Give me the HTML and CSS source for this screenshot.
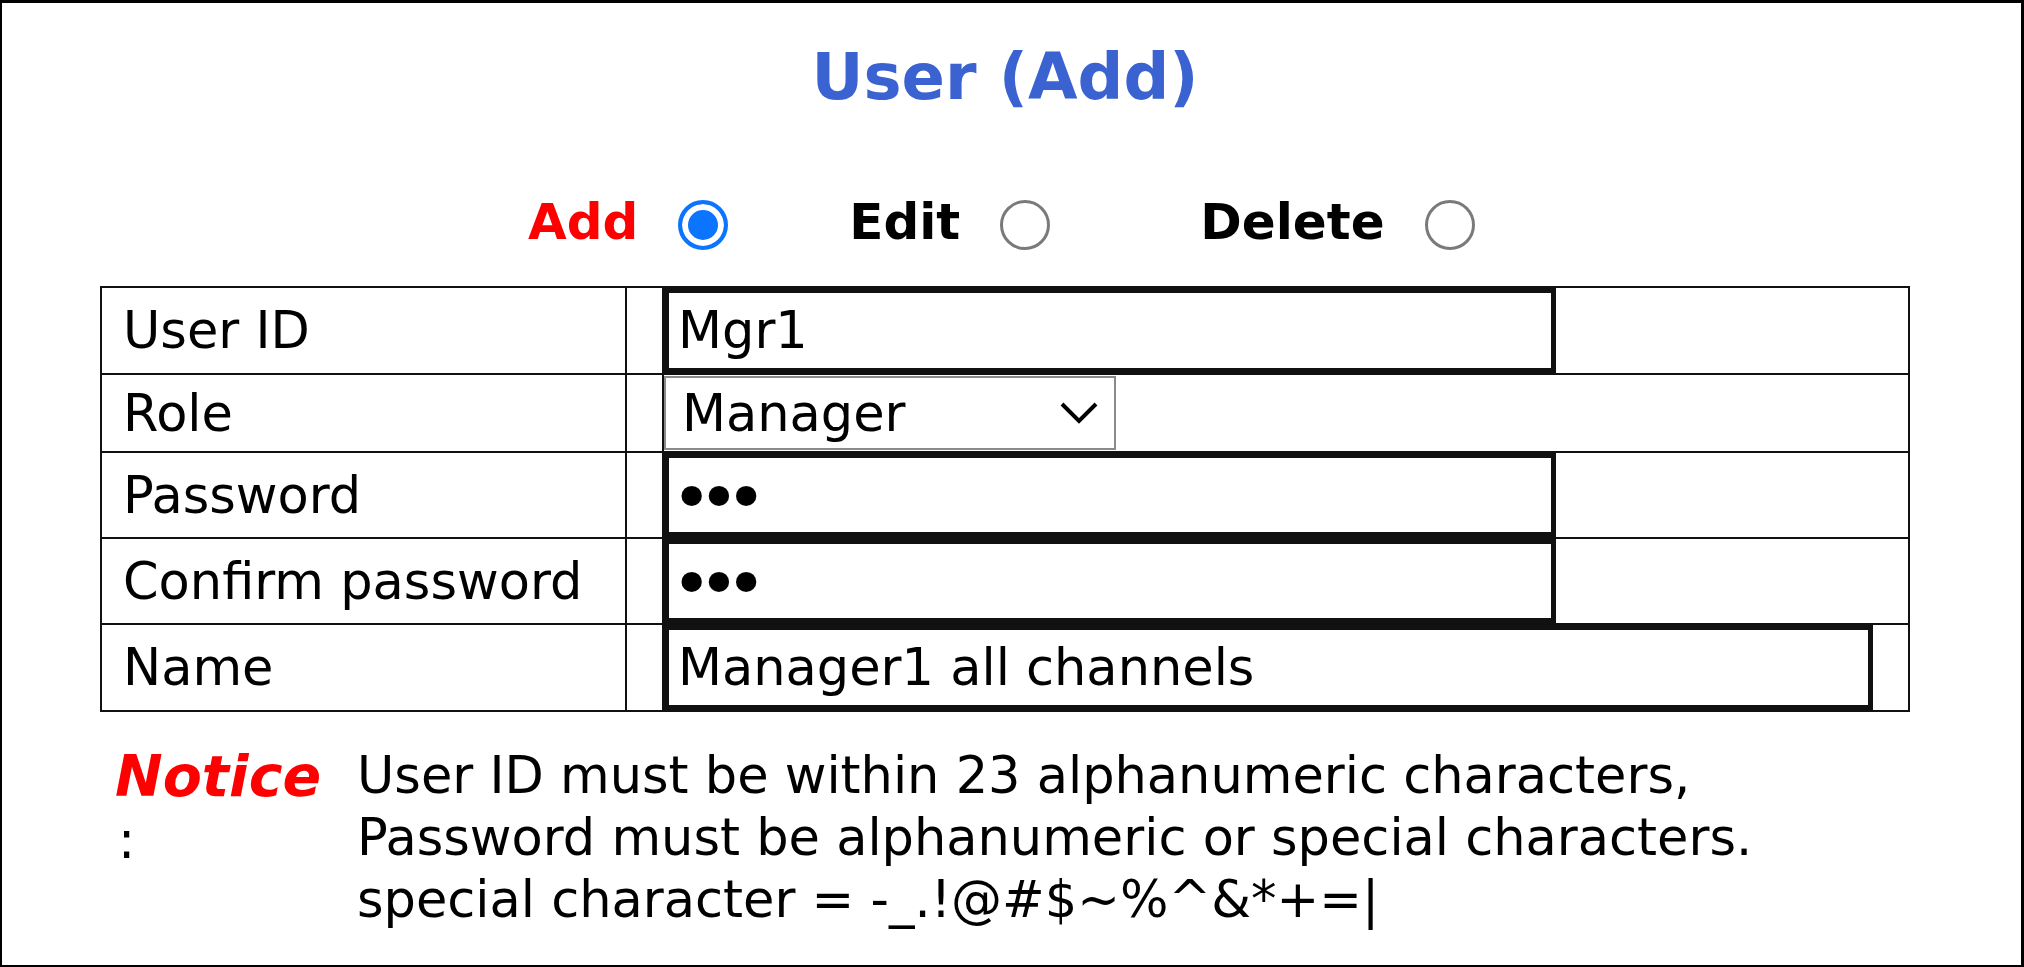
FILE: index.html
```html
<!DOCTYPE html>
<html lang="en">
<head>
<meta charset="utf-8">
<title>User (Add)</title>
<link rel="stylesheet" href="styles.css">
</head>
<body>
<div class="frame">
  <div class="content">
    <h1 class="title">User (Add)</h1>
    <div class="modes">
      <label class="mode mode-add">Add<input class="radio" type="radio" name="mode" checked></label>
      <label class="mode mode-edit">Edit<input class="radio" type="radio" name="mode"></label>
      <label class="mode mode-delete">Delete<input class="radio" type="radio" name="mode"></label>
    </div>
    <table class="form">
      <colgroup><col class="c1"><col class="c2"><col class="c3"></colgroup>
      <tr class="r1">
        <td class="lbl">User ID</td><td></td>
        <td><input class="field w-short h85" type="text" value="Mgr1"></td>
      </tr>
      <tr class="r2">
        <td class="lbl">Role</td><td></td>
        <td>
          <div class="select-wrap">
            <select class="select"><option>Manager</option><option>Operator</option><option>Viewer</option></select>
            <svg class="chev" width="38" height="22" viewBox="0 0 38 22"><path d="M2 2 L19 19 L36 2" fill="none" stroke="#000" stroke-width="4"/></svg>
          </div>
        </td>
      </tr>
      <tr class="r3">
        <td class="lbl">Password</td><td></td>
        <td><input class="field pw w-short h84" type="password" value="abc"></td>
      </tr>
      <tr class="r4">
        <td class="lbl">Confirm password</td><td></td>
        <td><input class="field pw w-short h84" type="password" value="abc"></td>
      </tr>
      <tr class="r5">
        <td class="lbl">Name</td><td></td>
        <td><input class="field w-long h85" type="text" value="Manager1 all channels"></td>
      </tr>
    </table>
    <div class="notice">
      <div class="notice-head"><span class="notice-word">Notice</span><br><span class="colon">:</span></div>
      <div class="notice-text">User ID must be within 23 alphanumeric characters,<br>Password must be alphanumeric or special characters.<br>special character = -_.!@#$~%^&amp;*+=|</div>
    </div>
  </div>
</div>
</body>
</html>
```

FILE: styles.css
```css
* { box-sizing: border-box; }
html, body { margin: 0; padding: 0; background: #fff; }
body { font-family: "DejaVu Sans", Verdana, sans-serif; color: #000; }

.frame {
  width: 2024px;
  height: 967px;
  border: solid #000;
  border-width: 3px 3px 2px 2px;
  overflow: hidden;
}
.content { margin-left: 98px; width: 1810px; }

.title {
  margin: 35px 0 0;
  font-size: 64px;
  line-height: 78px;
  font-weight: bold;
  color: #3a62d0;
  text-align: center;
}

.modes {
  display: flex;
  align-items: flex-start;
  margin-top: 81px;
  padding-left: 428px;
  height: 53px;
}
.mode {
  display: flex;
  align-items: flex-start;
  font-size: 50px;
  line-height: 50px;
  font-weight: bold;
}
.mode-add { color: #ff0000; }
.mode-edit { margin-left: 121px; }
.mode-delete { margin-left: 150px; }
.radio {
  appearance: none;
  -webkit-appearance: none;
  margin: 3px 0 0 40px;
  width: 50px;
  height: 50px;
  border-radius: 50%;
  border: 3px solid #7a7a7a;
  background: #fff;
}
.radio:checked {
  border: 4px solid #0b75ff;
  background: #0b75ff;
  box-shadow: inset 0 0 0 6px #fff;
}

.form {
  border-collapse: collapse;
  width: 1810px;
  margin-top: 36px;
}
.form td { border: 2px solid #111; padding: 0; }
.c1 { width: 525px; }
.c2 { width: 37px; }
.form td.lbl { padding-left: 21px; font-size: 51px; }

.field {
  display: block;
  margin: 0;
  border: 5px solid #111;
  border-radius: 0;
  padding: 0 9px;
  font-family: "DejaVu Sans", Verdana, sans-serif;
  font-size: 51px;
  color: #000;
  background: #fff;
  outline: none;
}
.pw {
  font-size: 70px;
  letter-spacing: -14px;
  padding: 5px 0 0 2px;
}
.w-short { width: 892px; }
.w-long { width: 1209px; }
.h85 { height: 85px; }
.h84 { height: 84px; }

.select-wrap {
  position: relative;
  width: 452px;
  height: 76px;
  padding: 1px 0;
}
.select {
  appearance: none;
  -webkit-appearance: none;
  display: block;
  width: 452px;
  height: 74px;
  margin: 0;
  border: 2px solid #8a8a8a;
  border-radius: 0;
  background: #fff;
  padding: 0 0 0 16px;
  font-family: "DejaVu Sans", Verdana, sans-serif;
  font-size: 51px;
  color: #000;
}
.chev { position: absolute; right: 18px; top: 27px; }

.notice {
  display: flex;
  margin-top: 33px;
  padding-left: 15px;
  line-height: 62px;
}
.notice-head { width: 242px; flex: none; font-size: 51px; }
.notice-word {
  color: #ff0000;
  font-weight: bold;
  font-style: italic;
  font-size: 57px;
}
.colon { padding-left: 3px; }
.notice-text { font-size: 51px; }
```
